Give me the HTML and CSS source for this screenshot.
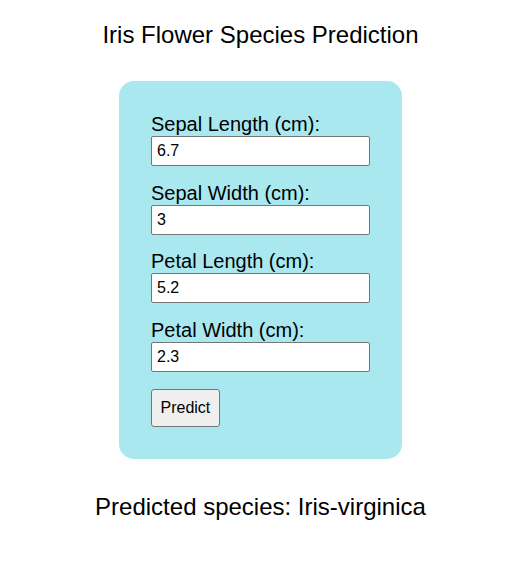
FILE: index.html
```html
<!DOCTYPE html>
<html>
<head>
<meta charset="utf-8">
<link rel="stylesheet" href="styles.css">
</head>
<body>
<h1 class="title">Iris Flower Species Prediction</h1>
<form class="card">
  <label class="label" for="sl">Sepal Length (cm):</label>
  <input class="field" id="sl" type="text" value="6.7">
  <label class="label" for="sw">Sepal Width (cm):</label>
  <input class="field" id="sw" type="text" value="3">
  <label class="label" for="pl">Petal Length (cm):</label>
  <input class="field" id="pl" type="text" value="5.2">
  <label class="label" for="pw">Petal Width (cm):</label>
  <input class="field" id="pw" type="text" value="2.3">
  <button class="btn" type="button">Predict</button>
</form>
<h2 class="result">Predicted species: Iris-virginica</h2>
</body>
</html>
```
FILE: styles.css
```css
html, body { margin: 0; padding: 0; background: #fff; }
body {
  font-family: "Liberation Sans", Arial, sans-serif;
  color: #000;
  display: flex;
  flex-direction: column;
  align-items: center;
  padding-left: 6px;
}
.title {
  font-size: 24px;
  font-weight: normal;
  line-height: 28px;
  margin: 21px 0 32px;
}
.card {
  background: #aae8f0;
  border-radius: 15px;
  padding: 32px;
  width: 219px;
  display: flex;
  flex-direction: column;
  align-items: flex-start;
}
.label {
  font-size: 20px;
  line-height: 23px;
}
.field {
  box-sizing: border-box;
  width: 219px;
  height: 30px;
  margin: 0 0 15.67px;
  padding: 0 5px;
  border: 1px solid #767676;
  border-radius: 2px;
  font-family: "Liberation Sans", Arial, sans-serif;
  font-size: 16px;
  background: #fff;
  color: #000;
}
.btn {
  margin-top: 1px;
  font-family: "Liberation Sans", Arial, sans-serif;
  font-size: 16px;
  line-height: 18px;
  padding: 9px 8.5px;
  border: 1px solid #767676;
  border-radius: 3px;
  background: #efefef;
  color: #000;
}
.result {
  font-size: 24px;
  font-weight: normal;
  margin: 34px 0 0;
}
```
